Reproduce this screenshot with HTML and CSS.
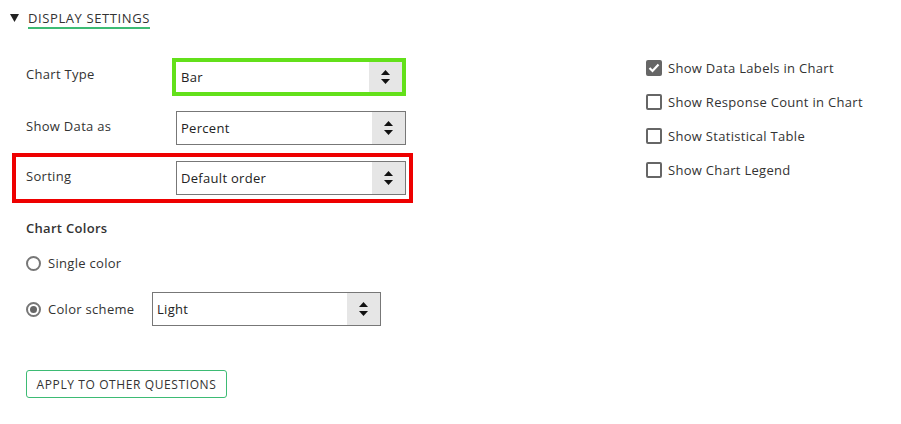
FILE: index.html
```html
<!DOCTYPE html>
<html lang="en">
<head>
    <meta charset="UTF-8">
    <title>Display Settings</title>
    <link rel="stylesheet" href="styles.css">
</head>
<body>
    <div class="section-header">
        <span class="caret"><svg width="9" height="8" viewBox="0 0 9 8"><polygon points="0,0 9,0 4.5,8" fill="#222"/></svg></span>
        <span class="section-title">DISPLAY SETTINGS</span>
    </div>

    <div class="settings">
        <div class="left-col">
            <div class="field-row first">
                <div class="field-label">Chart Type</div>
                <div class="select highlight-green">
                    <span class="select-value">Bar</span>
                    <span class="select-arrows"><svg width="9" height="14" viewBox="0 0 9 14"><polygon points="4.5,0 9,5 0,5" fill="#111"/><polygon points="0,9 9,9 4.5,14" fill="#111"/></svg></span>
                </div>
            </div>

            <div class="field-row">
                <div class="field-label">Show Data as</div>
                <div class="select">
                    <span class="select-value">Percent</span>
                    <span class="select-arrows"><svg width="9" height="14" viewBox="0 0 9 14"><polygon points="4.5,0 9,5 0,5" fill="#111"/><polygon points="0,9 9,9 4.5,14" fill="#111"/></svg></span>
                </div>
            </div>

            <div class="field-row highlight-red">
                <div class="field-label">Sorting</div>
                <div class="select">
                    <span class="select-value">Default order</span>
                    <span class="select-arrows"><svg width="9" height="14" viewBox="0 0 9 14"><polygon points="4.5,0 9,5 0,5" fill="#111"/><polygon points="0,9 9,9 4.5,14" fill="#111"/></svg></span>
                </div>
            </div>

            <div class="group-title">Chart Colors</div>

            <div class="radio-row single">
                <span class="radio"></span>
                <span class="radio-label">Single color</span>
            </div>

            <div class="radio-row scheme">
                <span class="radio checked"></span>
                <span class="radio-label">Color scheme</span>
                <div class="select scheme-select">
                    <span class="select-value">Light</span>
                    <span class="select-arrows"><svg width="9" height="14" viewBox="0 0 9 14"><polygon points="4.5,0 9,5 0,5" fill="#111"/><polygon points="0,9 9,9 4.5,14" fill="#111"/></svg></span>
                </div>
            </div>

            <button class="apply-btn">APPLY TO OTHER QUESTIONS</button>
        </div>

        <div class="right-col">
            <div class="check-row">
                <span class="checkbox checked"><svg width="12" height="10" viewBox="0 0 12 10"><polyline points="1.5,5 4.5,8 10.5,1.5" fill="none" stroke="#fff" stroke-width="2.2"/></svg></span>
                <span class="check-label">Show Data Labels in Chart</span>
            </div>
            <div class="check-row">
                <span class="checkbox"></span>
                <span class="check-label">Show Response Count in Chart</span>
            </div>
            <div class="check-row">
                <span class="checkbox"></span>
                <span class="check-label">Show Statistical Table</span>
            </div>
            <div class="check-row">
                <span class="checkbox"></span>
                <span class="check-label">Show Chart Legend</span>
            </div>
        </div>
    </div>
</body>
</html>
```

FILE: styles.css
```css
body {
    margin: 0;
    font-family: "Open Sans", "Noto Sans", sans-serif;
    font-size: 13px;
    letter-spacing: 0.3px;
    color: #333;
    background-color: #fff;
}
.section-header {
    display: flex;
    align-items: flex-start;
    padding: 10px 0 0 10px;
    height: 20px;
}
.caret {
    display: flex;
    width: 18px;
    padding-top: 4px;
}
.section-title {
    font-size: 13px;
    line-height: 16px;
    letter-spacing: 0.6px;
    color: #333;
    padding-bottom: 1px;
    border-bottom: 2px solid #3dbb74;
}
.settings {
    display: flex;
    padding-left: 26px;
}
.left-col {
    width: 390px;
}
.field-row {
    display: flex;
    align-items: flex-start;
    height: 34px;
    margin-top: 15px;
}
.field-row.first {
    margin-top: 28px;
    height: 38px;
}
.field-label {
    width: 150px;
    padding-top: 7px;
    line-height: 16px;
}
.first .field-label {
    padding-top: 8px;
}
.select {
    box-sizing: border-box;
    width: 230px;
    height: 34px;
    border: 1px solid #777;
    display: flex;
    align-items: stretch;
    background: #fff;
}
.select-value {
    flex: 1;
    padding-left: 4px;
    line-height: 32px;
    color: #222;
}
.select-arrows {
    width: 33px;
    background: #e6e6e6;
    display: flex;
    align-items: center;
    justify-content: center;
}
.select.highlight-green {
    width: 234px;
    height: 38px;
    margin-left: -4px;
    border: 4px solid #63e01a;
}
.select.highlight-green .select-value {
    line-height: 30px;
    padding-left: 5px;
}
.field-row.highlight-red {
    box-sizing: border-box;
    width: 401px;
    height: 50px;
    margin: 8px 0 0 -14px;
    padding: 4px 3px 4px 10px;
    border: 4px solid #ee0000;
}
.group-title {
    margin-top: 17px;
    font-weight: 600;
    line-height: 16px;
}
.radio-row {
    display: flex;
    align-items: center;
}
.radio-row.single {
    margin-top: 19px;
    height: 16px;
}
.radio-row.scheme {
    margin-top: 21px;
    height: 34px;
}
.radio {
    box-sizing: border-box;
    width: 15px;
    height: 15px;
    border: 2px solid #777;
    border-radius: 50%;
    margin-right: 7px;
    display: flex;
    align-items: center;
    justify-content: center;
}
.radio.checked::after {
    content: "";
    width: 7px;
    height: 7px;
    border-radius: 50%;
    background: #666;
}
.radio-label {
    line-height: 16px;
}
.scheme .radio-label {
    width: 104px;
}
.scheme-select {
    width: 229px;
}
.apply-btn {
    display: block;
    margin-top: 44px;
    width: 201px;
    height: 28px;
    padding: 0;
    background: #fff;
    border: 1px solid #3dbb74;
    border-radius: 3px;
    font-family: "Open Sans", "Noto Sans", sans-serif;
    font-size: 12px;
    letter-spacing: 0.6px;
    color: #333;
}
.right-col {
    margin-left: 230px;
    padding-top: 21px;
}
.check-row {
    display: flex;
    align-items: center;
    height: 34px;
}
.checkbox {
    box-sizing: border-box;
    width: 16px;
    height: 16px;
    border: 2px solid #666;
    border-radius: 2px;
    margin-right: 6px;
    display: flex;
    align-items: center;
    justify-content: center;
}
.checkbox.checked {
    background: #666;
}
.check-label {
    line-height: 16px;
}
```
